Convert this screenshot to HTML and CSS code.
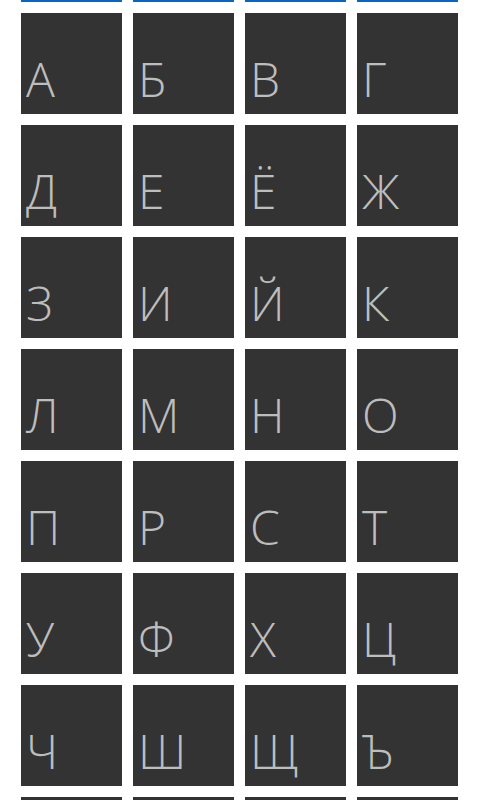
FILE: index.html
```html
<!DOCTYPE html>
<html lang="ru">
<head>
<meta charset="utf-8">
<link rel="stylesheet" href="styles.css">
</head>
<body>
<div class="grid">
  <div class="tile blue"></div><div class="tile blue"></div><div class="tile blue"></div><div class="tile blue"></div>
  <div class="tile"><span>А</span></div><div class="tile"><span>Б</span></div><div class="tile"><span>В</span></div><div class="tile"><span>Г</span></div>
  <div class="tile"><span>Д</span></div><div class="tile"><span>Е</span></div><div class="tile"><span>Ё</span></div><div class="tile"><span>Ж</span></div>
  <div class="tile"><span>З</span></div><div class="tile"><span>И</span></div><div class="tile"><span>Й</span></div><div class="tile"><span>К</span></div>
  <div class="tile"><span>Л</span></div><div class="tile"><span>М</span></div><div class="tile"><span>Н</span></div><div class="tile"><span>О</span></div>
  <div class="tile"><span>П</span></div><div class="tile"><span>Р</span></div><div class="tile"><span>С</span></div><div class="tile"><span>Т</span></div>
  <div class="tile"><span>У</span></div><div class="tile"><span>Ф</span></div><div class="tile"><span>Х</span></div><div class="tile"><span>Ц</span></div>
  <div class="tile"><span>Ч</span></div><div class="tile"><span>Ш</span></div><div class="tile"><span>Щ</span></div><div class="tile"><span>Ъ</span></div>
  <div class="tile"></div><div class="tile"></div><div class="tile"></div><div class="tile"></div>
</div>
</body>
</html>
```
FILE: styles.css
```css
html, body {
  margin: 0;
  padding: 0;
  background: #ffffff;
  overflow: hidden;
  height: 800px;
}
.grid {
  display: grid;
  grid-template-columns: repeat(4, 101px);
  grid-auto-rows: 101px;
  gap: 11px;
  padding-left: 21px;
  margin-top: -99px;
  height: 899px;
  overflow: hidden;
}
.tile {
  background: #333333;
  display: flex;
  align-items: flex-end;
  padding: 0 0 11px 5px;
  box-sizing: border-box;
  font-family: "Open Sans", "Noto Sans", sans-serif;
  font-weight: 300;
  font-size: 48px;
  line-height: 1;
  color: #bdbdbd;
}
.tile.blue {
  background: #0a64c8;
}
```
